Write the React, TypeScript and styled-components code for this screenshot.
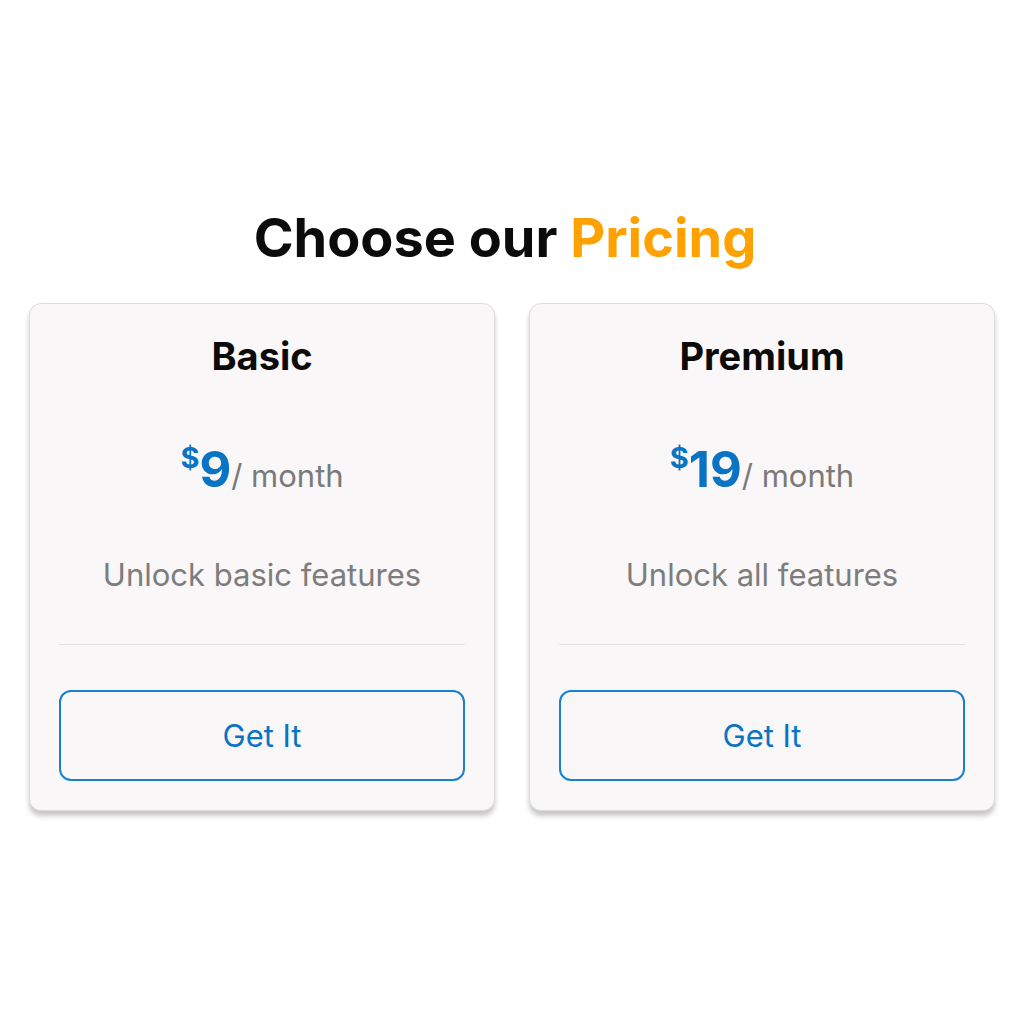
import { ReactElement } from 'react';
import styled, { createGlobalStyle } from 'styled-components';

interface Plan {
  name: string;
  price: number;
  description: string;
}

const plans: Plan[] = [
  { name: 'Basic', price: 9, description: 'Unlock basic features' },
  { name: 'Premium', price: 19, description: 'Unlock all features' },
];

const GlobalStyle = createGlobalStyle`
  body {
    margin: 0;
    background: #ffffff;
    font-family: Inter, "Noto Sans", sans-serif;
  }
`;

const Page = styled.div`
  width: 1024px;
  height: 1024px;
  box-sizing: border-box;
  padding: 206px 29px 0;
`;

const Heading = styled.h1`
  margin: 0;
  padding-right: 14px;
  text-align: center;
  font-size: 54px;
  font-weight: 700;
  line-height: 64px;
  color: #0b0b0b;

  span {
    color: #ffa100;
  }
`;

const Cards = styled.div`
  margin-top: 33px;
  display: grid;
  grid-template-columns: 1fr 1fr;
  gap: 34px;
`;

const Card = styled.div`
  background: #f9f7f8;
  border: 1px solid #dcdcdc;
  border-radius: 12px;
  box-shadow: 0 5px 5px rgba(0, 0, 0, 0.22);
  padding: 29px 29px 29px;
  display: flex;
  flex-direction: column;
  align-items: center;
`;

const PlanName = styled.div`
  font-size: 38px;
  font-weight: 700;
  line-height: 46px;
  color: #0b0b0b;
`;

const Price = styled.div`
  margin-top: 63px;
  display: flex;
  align-items: baseline;
  line-height: 56px;
`;

const Currency = styled.span`
  font-size: 29px;
  font-weight: 700;
  color: #0a74c4;
  align-self: flex-start;
  line-height: 32px;
`;

const Amount = styled.span`
  font-size: 49px;
  font-weight: 700;
  color: #0a74c4;
`;

const Period = styled.span`
  font-size: 31px;
  color: #7a7a7a;
`;

const Description = styled.div`
  margin-top: 52px;
  font-size: 31px;
  line-height: 38px;
  color: #7d7d7d;
`;

const Divider = styled.hr`
  width: 100%;
  margin: 50px 0 0;
  border: none;
  border-top: 1px solid #e2e0e1;
`;

const GetButton = styled.button`
  margin-top: 45px;
  width: 100%;
  height: 91px;
  border: 2px solid #1880d0;
  border-radius: 12px;
  background: transparent;
  font-family: Inter, "Noto Sans", sans-serif;
  font-size: 31px;
  color: #0a74c4;
  cursor: pointer;
`;

export default function App(): ReactElement {
  return (
    <Page>
      <GlobalStyle />
      <Heading>
        Choose our <span>Pricing</span>
      </Heading>
      <Cards>
        {plans.map((plan) => (
          <Card key={plan.name}>
            <PlanName>{plan.name}</PlanName>
            <Price>
              <Currency>$</Currency>
              <Amount>{plan.price}</Amount>
              <Period>/ month</Period>
            </Price>
            <Description>{plan.description}</Description>
            <Divider />
            <GetButton>Get It</GetButton>
          </Card>
        ))}
      </Cards>
    </Page>
  );
}
